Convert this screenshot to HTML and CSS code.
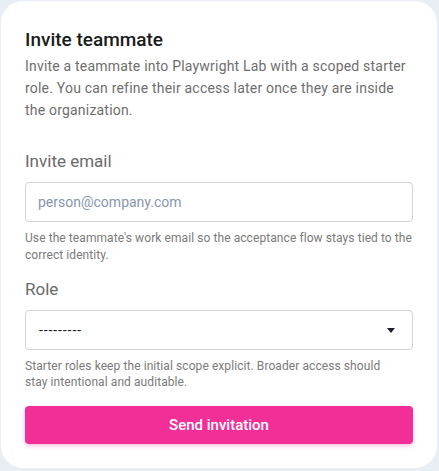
FILE: index.html
```html
<!DOCTYPE html>
<html lang="en">
<head>
<meta charset="utf-8">
<title>Invite teammate</title>
<link rel="stylesheet" href="styles.css">
</head>
<body>
<form class="card">
  <h2 class="title">Invite teammate</h2>
  <p class="intro">Invite a teammate into Playwright Lab with a scoped starter role. You can refine their access later once they are inside the organization.</p>

  <div class="field">
    <label class="label" for="email">Invite email</label>
    <input class="input" id="email" type="email" placeholder="person@company.com">
    <p class="help">Use the teammate's work email so the acceptance flow stays tied to the correct identity.</p>
  </div>

  <div class="field field-role">
    <label class="label" for="role">Role</label>
    <div class="select">
      <span class="select-value">---------</span>
      <svg class="caret" width="8" height="5" viewBox="0 0 8 5"><path d="M0 0h8L4 5z" fill="#1c1f2a"/></svg>
    </div>
    <p class="help help-tight">Starter roles keep the initial scope explicit. Broader access should<br>stay intentional and auditable.</p>
  </div>

  <button class="submit" type="button">Send invitation</button>
</form>
</body>
</html>
```
FILE: styles.css
```css
* { box-sizing: border-box; }
html, body { margin: 0; padding: 0; }
body {
  background: #e9eef4;
  font-family: Roboto, "Noto Sans", sans-serif;
  width: 439px;
  height: 471px;
  padding: 1px 2px 0 1px;
}
.card {
  background: #fff;
  border-radius: 22px;
  padding: 28px 24px 24px 24px;
  height: 467px;
  display: flex;
  flex-direction: column;
}
.title {
  margin: 0;
  font-size: 19px;
  font-weight: 500;
  color: #1b1b1b;
  line-height: 22px;
}
.intro {
  margin: 4px 0 0;
  font-size: 14px;
  line-height: 22px;
  letter-spacing: 0.2px;
  color: #6e6e6e;
}
.field { display: flex; flex-direction: column; margin-top: 30px; }
.field-role { margin-top: 15px; }
.label {
  font-size: 17px;
  line-height: 20px;
  color: #6a6a6a;
  font-weight: 400;
}
.input {
  margin-top: 11px;
  height: 40px;
  border: 1px solid #d4d4d4;
  border-radius: 4px;
  padding: 0 12px;
  font: inherit;
  font-size: 14px;
  color: #333;
  outline: none;
}
.input::placeholder { color: #8796b0; }
.select {
  margin-top: 11px;
  height: 40px;
  border: 1px solid #d4d4d4;
  border-radius: 4px;
  padding: 0 17px 0 13px;
  display: flex;
  align-items: center;
  justify-content: space-between;
  font-size: 14px;
  color: #1c1f2a;
}
.select-value { letter-spacing: 0.9px; }
.help {
  margin: 8px 0 0;
  font-size: 12px;
  line-height: 17px;
  letter-spacing: 0.08px;
  color: #7a7a7a;
}
.help-tight { line-height: 16px; }
.submit {
  margin-top: 16px;
  height: 40px;
  border: 0;
  border-radius: 4px;
  background: #f22f96;
  color: #fff;
  font: inherit;
  font-size: 15px;
  font-weight: 500;
  box-shadow: 0 2px 4px rgba(242, 47, 150, 0.3);
}
```
